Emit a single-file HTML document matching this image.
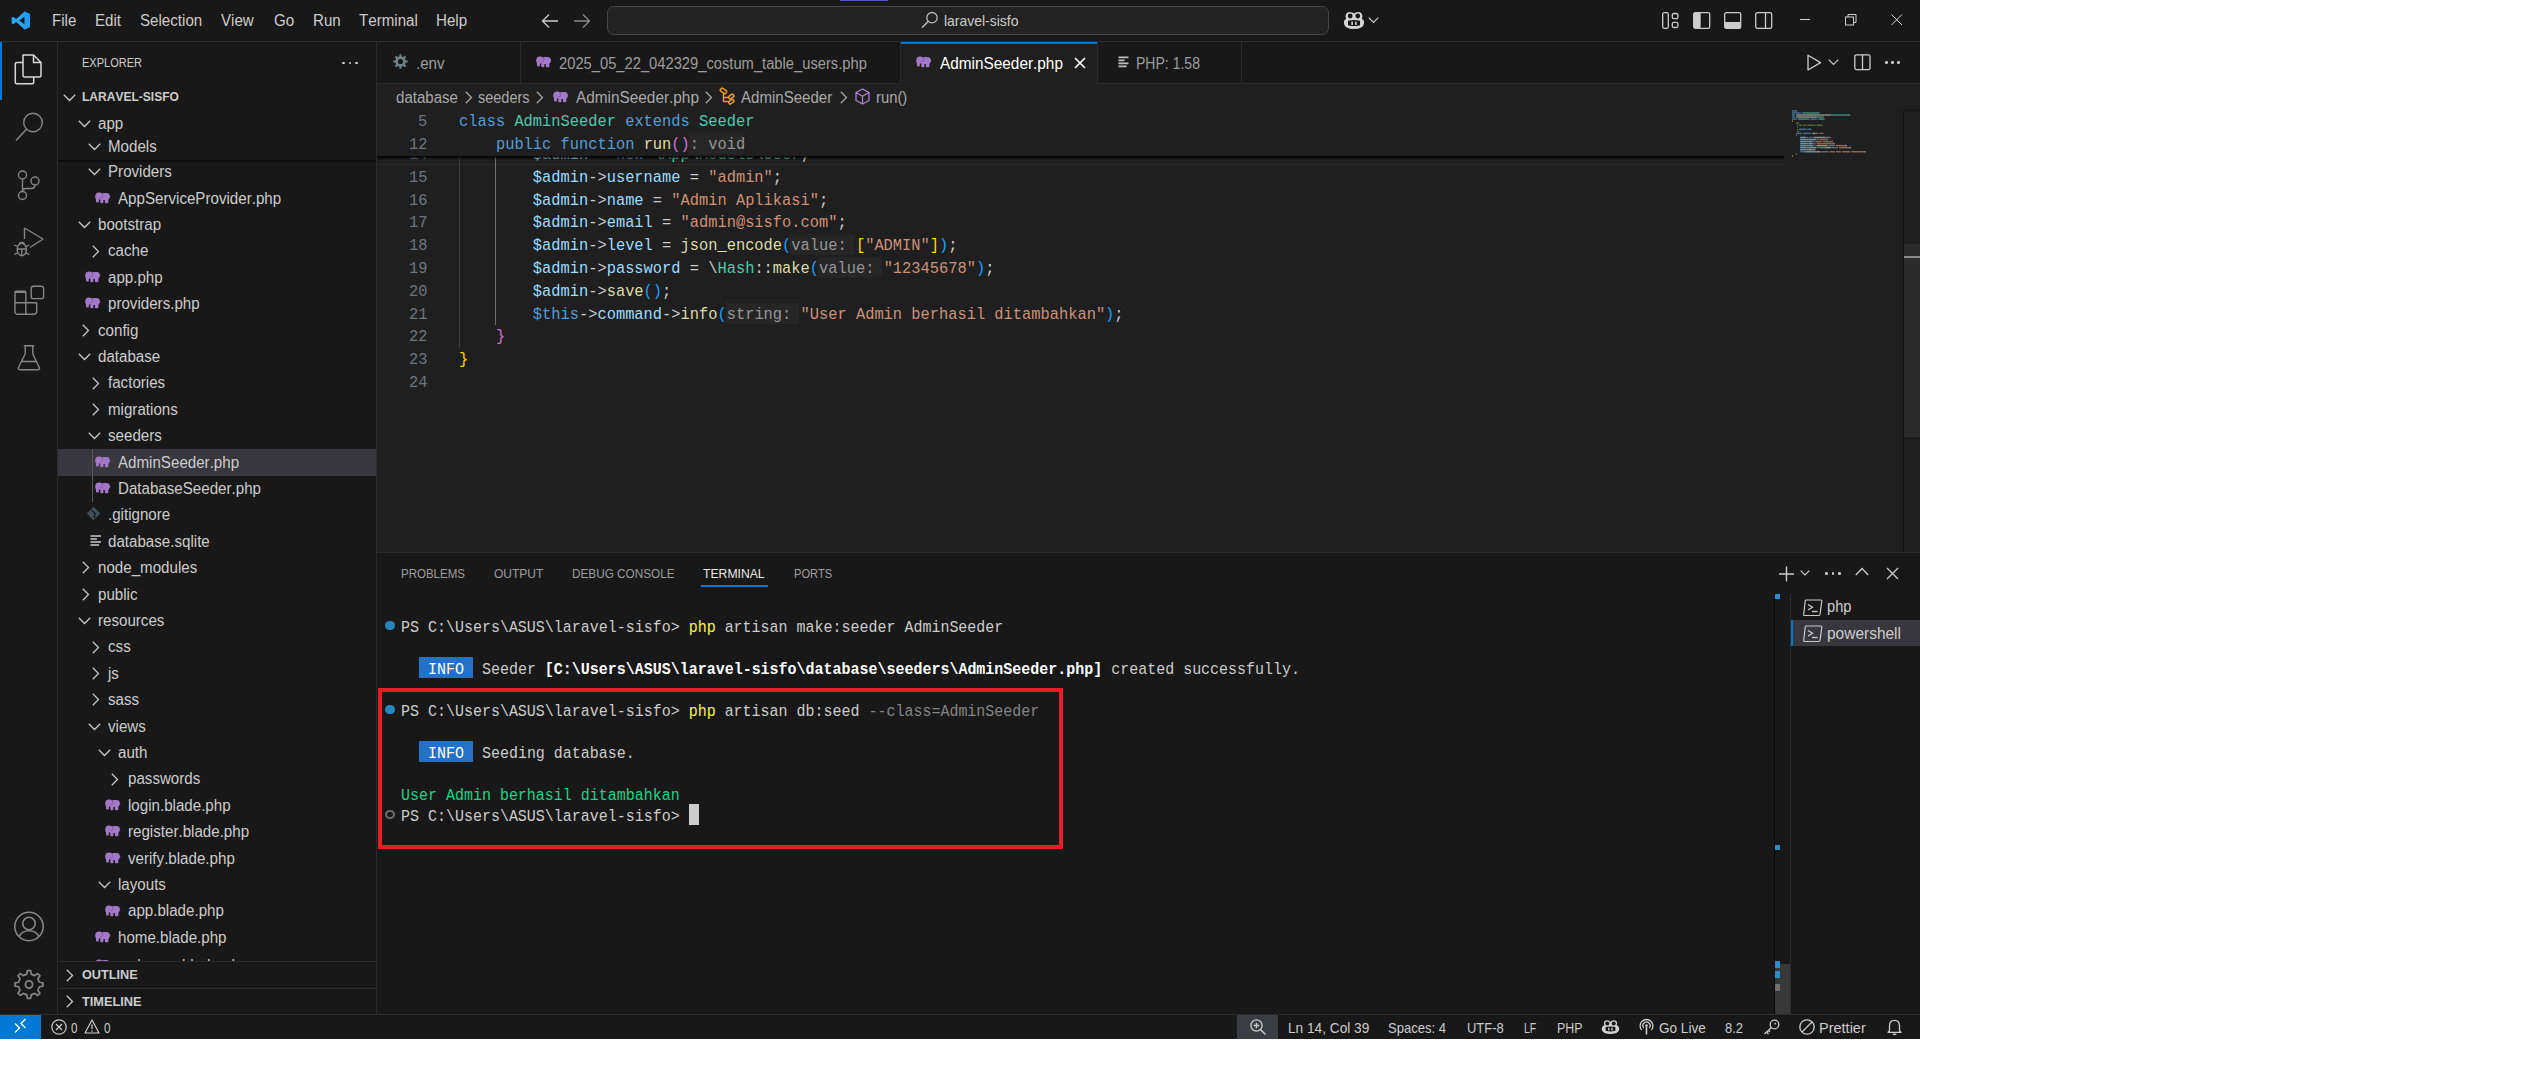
<!DOCTYPE html>
<html><head><meta charset="utf-8">
<style>
*{margin:0;padding:0;box-sizing:border-box}
html,body{width:2544px;height:1080px;background:#fff;overflow:hidden}
body{position:relative;font-family:"Liberation Sans",sans-serif}
.a{position:absolute}
.t{position:absolute;white-space:pre;font-kerning:none}
svg{position:absolute;overflow:visible}
#win{position:absolute;left:0;top:0;width:1920px;height:1039px;background:#181818;overflow:hidden}
</style></head><body><div id="win">
<div class="a" style="left:0px;top:41px;width:1920px;height:1px;background:#2b2b2b;"></div>
<div class="a" style="left:840px;top:0px;width:48px;height:1px;background:#5359c4;"></div>
<svg style="left:11px;top:11px;" width="19" height="19" viewBox="0 0 19 19"><path d="M13.6 0.6 L18.2 2.8 Q19 3.2 19 4.1 V14.9 Q19 15.8 18.2 16.2 L13.6 18.4 L5.2 10.9 L2.2 13.2 L0.6 12.3 V6.7 L2.2 5.8 L5.2 8.1 Z M13.7 5.6 L8.4 9.5 L13.7 13.4 Z" fill="#2aa4f4"/><path d="M13.6 0.6 L18.2 2.8 Q19 3.2 19 4.1 V14.9 Q19 15.8 18.2 16.2 L13.6 18.4 Z" fill="#1f9cf0" opacity="0.9"/></svg>
<div class="t" style="left:52.00px;top:11.88px;font-size:15.6px;line-height:17.428px;color:#cccccc;font-family:'Liberation Sans',sans-serif;transform:scaleX(0.9700);transform-origin:0 0;">File</div>
<div class="t" style="left:95.00px;top:11.88px;font-size:15.6px;line-height:17.428px;color:#cccccc;font-family:'Liberation Sans',sans-serif;transform:scaleX(0.9700);transform-origin:0 0;">Edit</div>
<div class="t" style="left:140.00px;top:11.88px;font-size:15.6px;line-height:17.428px;color:#cccccc;font-family:'Liberation Sans',sans-serif;transform:scaleX(0.9700);transform-origin:0 0;">Selection</div>
<div class="t" style="left:221.30px;top:11.88px;font-size:15.6px;line-height:17.428px;color:#cccccc;font-family:'Liberation Sans',sans-serif;transform:scaleX(0.9700);transform-origin:0 0;">View</div>
<div class="t" style="left:274.00px;top:11.88px;font-size:15.6px;line-height:17.428px;color:#cccccc;font-family:'Liberation Sans',sans-serif;transform:scaleX(0.9700);transform-origin:0 0;">Go</div>
<div class="t" style="left:313.00px;top:11.88px;font-size:15.6px;line-height:17.428px;color:#cccccc;font-family:'Liberation Sans',sans-serif;transform:scaleX(0.9700);transform-origin:0 0;">Run</div>
<div class="t" style="left:359.20px;top:11.88px;font-size:15.6px;line-height:17.428px;color:#cccccc;font-family:'Liberation Sans',sans-serif;transform:scaleX(0.9700);transform-origin:0 0;">Terminal</div>
<div class="t" style="left:436.00px;top:11.88px;font-size:15.6px;line-height:17.428px;color:#cccccc;font-family:'Liberation Sans',sans-serif;transform:scaleX(0.9700);transform-origin:0 0;">Help</div>
<svg style="left:541px;top:13px;" width="18" height="16" viewBox="0 0 18 16"><path d="M8 1.5 L1.5 8 L8 14.5 M1.5 8 H17" stroke="#cccccc" stroke-width="1.3" fill="none"/></svg>
<svg style="left:573px;top:13px;" width="18" height="16" viewBox="0 0 18 16"><path d="M10 1.5 L16.5 8 L10 14.5 M16.5 8 H1" stroke="#8b8b8b" stroke-width="1.3" fill="none"/></svg>
<div class="a" style="left:607px;top:6px;width:722px;height:29px;background:#222222;border:1px solid #474747;border-radius:7px;"></div>
<svg style="left:921px;top:11px;" width="18" height="18" viewBox="0 0 18 18"><circle cx="11" cy="6.7" r="5.2" stroke="#b8b8b8" stroke-width="1.3" fill="none"/><path d="M7.3 10.4 L1 16.7" stroke="#b8b8b8" stroke-width="1.5"/></svg>
<div class="t" style="left:943.50px;top:12.96px;font-size:14.4px;line-height:16.088px;color:#cccccc;font-family:'Liberation Sans',sans-serif;transform:scaleX(0.9700);transform-origin:0 0;">laravel-sisfo</div>
<svg style="left:1343px;top:11px;" width="22" height="19" viewBox="0 0 22 19"><path d="M3.2 7.6 Q2.4 6.5 2.6 4.8 Q3 0.9 7 0.9 Q9.6 0.9 11 2.6 Q12.4 0.9 15 0.9 Q19 0.9 19.4 4.8 Q19.6 6.5 18.8 7.6 Q21.3 9.2 21 12.4 Q20.4 17.8 11 18 Q1.6 17.8 1 12.4 Q0.7 9.2 3.2 7.6 Z" fill="#d4d4d4"/><circle cx="7.2" cy="5" r="2.4" fill="#181818"/><circle cx="14.8" cy="5" r="2.4" fill="#181818"/><path d="M5 9.8 Q11 8.3 17 9.8 V14.2 Q11 16 5 14.2 Z" fill="#181818"/><rect x="8.3" y="10.6" width="1.6" height="3.4" rx="0.5" fill="#d4d4d4"/><rect x="12.1" y="10.6" width="1.6" height="3.4" rx="0.5" fill="#d4d4d4"/></svg>
<svg style="left:1368px;top:17px;" width="11" height="7" viewBox="0 0 11 7"><path d="M0.7 0.7 L5.5 5.5 L10.3 0.7" stroke="#cccccc" stroke-width="1.2" fill="none"/></svg>
<svg style="left:1662px;top:12px;" width="18" height="17" viewBox="0 0 18 17"><rect x="0.7" y="0.7" width="5.6" height="15.6" rx="1.5" stroke="#cccccc" stroke-width="1.3" fill="none"/><rect x="10.3" y="1.5" width="5.6" height="5.2" rx="1.5" stroke="#cccccc" stroke-width="1.3" fill="none"/><rect x="10.3" y="10.3" width="5.6" height="5.2" rx="1.5" stroke="#cccccc" stroke-width="1.3" fill="none"/></svg>
<svg style="left:1693px;top:12px;" width="18" height="17" viewBox="0 0 18 17"><rect x="0.7" y="0.7" width="16" height="15.6" rx="1.6" stroke="#cccccc" stroke-width="1.3" fill="none"/><rect x="0.7" y="0.7" width="7" height="15.6" rx="1.2" fill="#cccccc"/></svg>
<svg style="left:1724px;top:12px;" width="18" height="17" viewBox="0 0 18 17"><rect x="0.7" y="0.7" width="16" height="15.6" rx="1.6" stroke="#cccccc" stroke-width="1.3" fill="none"/><rect x="0.7" y="10" width="16" height="6.3" rx="1.2" fill="#cccccc"/></svg>
<svg style="left:1755px;top:12px;" width="18" height="17" viewBox="0 0 18 17"><rect x="0.7" y="0.7" width="16" height="15.6" rx="1.6" stroke="#cccccc" stroke-width="1.3" fill="none"/><path d="M10.5 1 V16" stroke="#cccccc" stroke-width="1.3"/></svg>
<div class="a" style="left:1800px;top:19px;width:10px;height:1px;background:#d0d0d0;"></div>
<svg style="left:1845px;top:14px;" width="12" height="12" viewBox="0 0 12 12"><rect x="0.5" y="3" width="8" height="8" stroke="#d0d0d0" stroke-width="1" fill="none"/><path d="M3 3 V0.5 H11 V8.5 H8.5" stroke="#d0d0d0" stroke-width="1" fill="none"/></svg>
<svg style="left:1891px;top:14px;" width="12" height="12" viewBox="0 0 12 12"><path d="M0.5 0.5 L11 11 M11 0.5 L0.5 11" stroke="#d8d8d8" stroke-width="1"/></svg>
<div class="a" style="left:57px;top:42px;width:1px;height:972px;background:#2b2b2b;"></div>
<div class="a" style="left:0px;top:42px;width:2px;height:58px;background:#0078d4;"></div>
<svg style="left:14px;top:54px;" width="29" height="31" viewBox="0 0 29 31"><path d="M9 1 H19.5 L27 8.5 V21.5 Q27 23 25.5 23 H10.5 Q9 23 9 21.5 Z" stroke="#d7d7d7" stroke-width="1.5" fill="none" stroke-linejoin="round"/><path d="M19.5 1 V8.5 H27" stroke="#d7d7d7" stroke-width="1.5" fill="none"/><path d="M9 8.5 H2.8 Q1.3 8.5 1.3 10 V28.3 Q1.3 29.8 2.8 29.8 H18.2 Q19.7 29.8 19.7 28.3 V23" stroke="#d7d7d7" stroke-width="1.5" fill="none"/></svg>
<svg style="left:14px;top:111px;" width="30" height="32" viewBox="0 0 30 32"><circle cx="19" cy="11.5" r="9.3" stroke="#868686" stroke-width="1.4" fill="none"/><path d="M12.5 18.3 L2 29.5" stroke="#868686" stroke-width="1.6"/></svg>
<svg style="left:16px;top:168px;" width="25" height="33" viewBox="0 0 25 33"><circle cx="6.5" cy="7" r="4" stroke="#868686" stroke-width="1.4" fill="none"/><circle cx="19" cy="13" r="4" stroke="#868686" stroke-width="1.4" fill="none"/><circle cx="6.5" cy="27.5" r="4" stroke="#868686" stroke-width="1.4" fill="none"/><path d="M6.5 11 V23.5 M19 17 Q19 20.5 15.5 20.5 H10 Q6.5 20.5 6.5 23.5" stroke="#868686" stroke-width="1.4" fill="none"/></svg>
<svg style="left:13px;top:226px;" width="32" height="34" viewBox="0 0 32 34"><path d="M11.5 2 L30 13 L17 21.5 M11.5 2 V13" stroke="#868686" stroke-width="1.4" fill="none" stroke-linejoin="round"/><ellipse cx="8.8" cy="23.5" rx="4.6" ry="6.2" stroke="#868686" stroke-width="1.4" fill="#181818"/><path d="M4.2 23 H13.4 M6 17.5 Q8.8 15.3 11.6 17.5 M1.3 19 L4.5 20.5 M16.3 19 L13.1 20.5 M1.3 28.5 L4.6 26.8 M16.3 28.5 L13 26.8 M8.8 23 V29.5" stroke="#868686" stroke-width="1.3" fill="none"/></svg>
<svg style="left:13px;top:285px;" width="32" height="31" viewBox="0 0 32 31"><path d="M2 7.3 H12.8 V17.8 H23.7 V26.6 Q23.7 29.3 21 29.3 H4.7 Q2 29.3 2 26.6 Z M2 17.8 H12.8 V29.3" stroke="#868686" stroke-width="1.4" fill="none" stroke-linejoin="round"/><path d="M2 7.3 Q2 6.3 3 6.3 H11.8 Q12.8 6.3 12.8 7.3" stroke="#868686" stroke-width="1.4" fill="none"/><rect x="18.2" y="1.2" width="12.4" height="12.4" rx="2.2" stroke="#868686" stroke-width="1.4" fill="none"/></svg>
<svg style="left:16px;top:344px;" width="26" height="28" viewBox="0 0 26 28"><path d="M7.8 1.8 H18.2 M9.2 1.8 V10 L2.5 23.5 Q1.8 25.8 4 25.8 H21.8 Q24 25.8 23.3 23.5 L16.8 10 V1.8 M5.5 17.5 H20.5" stroke="#868686" stroke-width="1.4" fill="none" stroke-linejoin="round"/></svg>
<svg style="left:13px;top:911px;" width="32" height="32" viewBox="0 0 32 32"><circle cx="16" cy="15.5" r="14.2" stroke="#868686" stroke-width="1.6" fill="none"/><circle cx="16" cy="12.5" r="6.2" stroke="#868686" stroke-width="1.6" fill="none"/><path d="M6 25.5 Q9 19.7 16 19.7 Q23 19.7 26 25.5" stroke="#868686" stroke-width="1.6" fill="none"/></svg>
<svg style="left:13px;top:968px;" width="32" height="32" viewBox="0 0 32 32"><polygon points="26.36,14.27 29.90,14.85 29.90,18.15 26.36,18.73 24.90,22.25 26.99,25.17 24.67,27.49 21.75,25.40 18.23,26.86 17.65,30.40 14.35,30.40 13.77,26.86 10.25,25.40 7.33,27.49 5.01,25.17 7.10,22.25 5.64,18.73 2.10,18.15 2.10,14.85 5.64,14.27 7.10,10.75 5.01,7.83 7.33,5.51 10.25,7.60 13.77,6.14 14.35,2.60 17.65,2.60 18.23,6.14 21.75,7.60 24.67,5.51 26.99,7.83 24.90,10.75" stroke="#868686" stroke-width="1.7" fill="none" stroke-linejoin="round"/><circle cx="16" cy="16.5" r="3.6" stroke="#868686" stroke-width="1.7" fill="none"/></svg>
<div class="a" style="left:376px;top:42px;width:1px;height:972px;background:#2b2b2b;"></div>
<div class="t" style="left:81.50px;top:56.45px;font-size:13.2px;line-height:14.747px;color:#cccccc;font-family:'Liberation Sans',sans-serif;transform:scaleX(0.8346);transform-origin:0 0;">EXPLORER</div>
<div class="a" style="left:342px;top:61.5px;width:2.6px;height:2.6px;background:#cccccc;border-radius:50%;"></div>
<div class="a" style="left:348.5px;top:61.5px;width:2.6px;height:2.6px;background:#cccccc;border-radius:50%;"></div>
<div class="a" style="left:355px;top:61.5px;width:2.6px;height:2.6px;background:#cccccc;border-radius:50%;"></div>
<div class="a" style="left:0;top:0;width:1920px;height:1039px;clip-path:inset(110px 1544px 78px 58px)">
<div class="a" style="left:58px;top:449.4px;width:318px;height:26.4px;background:#37373d;"></div>
<div class="a" style="left:92px;top:449.4px;width:1px;height:52.8px;background:#585858;"></div>
<svg style="left:88.10000000000001px;top:168.4px;" width="13" height="8" viewBox="0 0 13 8"><path d="M0.8 0.8 L6.5 6.5 L12.2 0.8" stroke="#cccccc" stroke-width="1.25" fill="none"/></svg>
<div class="t" style="left:108.10px;top:163.28px;font-size:15.6px;line-height:17.428px;color:#cccccc;font-family:'Liberation Sans',sans-serif;transform:scaleX(0.9700);transform-origin:0 0;">Providers</div>
<svg style="left:94.80000000000001px;top:191.8px;" width="16" height="12" viewBox="0 0 16 12"><path d="M4.2 0.6 Q0.2 0.6 0.2 4.6 Q0.2 6.5 1 7.5 V9.4 Q1 10.4 2 10.4 H2.9 Q3.9 10.4 3.9 9.4 V7.4 Q4.6 7.6 5.3 7.3 V10.2 Q5.3 11.3 6.3 11.3 H7.4 Q8.4 11.3 8.4 10.2 V7.9 H9.9 V10.2 Q9.9 11.3 10.9 11.3 H12.3 Q13.4 11.3 13.4 10.2 V7.7 Q14.6 6.6 14.9 5.3 L15.6 4.8 L14.9 4.3 Q14.5 1.1 11.4 1.1 H8.6 Q7.7 1.1 7.1 1.4 Q6 0.6 4.2 0.6 Z" fill="#a478c8"/><path d="M7.3 1.4 Q8.3 3.6 7.4 5.1 Q6.5 6.3 5.1 5.4" stroke="#7a58a0" stroke-width="0.8" fill="none"/></svg>
<div class="t" style="left:117.80px;top:189.68px;font-size:15.6px;line-height:17.428px;color:#cccccc;font-family:'Liberation Sans',sans-serif;transform:scaleX(0.9700);transform-origin:0 0;">AppServiceProvider.php</div>
<svg style="left:78.4px;top:221.2px;" width="13" height="8" viewBox="0 0 13 8"><path d="M0.8 0.8 L6.5 6.5 L12.2 0.8" stroke="#cccccc" stroke-width="1.25" fill="none"/></svg>
<div class="t" style="left:98.40px;top:216.08px;font-size:15.6px;line-height:17.428px;color:#cccccc;font-family:'Liberation Sans',sans-serif;transform:scaleX(0.9700);transform-origin:0 0;">bootstrap</div>
<svg style="left:91.60000000000001px;top:244.60000000000002px;" width="8" height="13" viewBox="0 0 8 13"><path d="M0.8 0.8 L6.5 6.5 L0.8 12.2" stroke="#cccccc" stroke-width="1.25" fill="none"/></svg>
<div class="t" style="left:108.10px;top:242.48px;font-size:15.6px;line-height:17.428px;color:#cccccc;font-family:'Liberation Sans',sans-serif;transform:scaleX(0.9700);transform-origin:0 0;">cache</div>
<svg style="left:85.10000000000001px;top:271.0px;" width="16" height="12" viewBox="0 0 16 12"><path d="M4.2 0.6 Q0.2 0.6 0.2 4.6 Q0.2 6.5 1 7.5 V9.4 Q1 10.4 2 10.4 H2.9 Q3.9 10.4 3.9 9.4 V7.4 Q4.6 7.6 5.3 7.3 V10.2 Q5.3 11.3 6.3 11.3 H7.4 Q8.4 11.3 8.4 10.2 V7.9 H9.9 V10.2 Q9.9 11.3 10.9 11.3 H12.3 Q13.4 11.3 13.4 10.2 V7.7 Q14.6 6.6 14.9 5.3 L15.6 4.8 L14.9 4.3 Q14.5 1.1 11.4 1.1 H8.6 Q7.7 1.1 7.1 1.4 Q6 0.6 4.2 0.6 Z" fill="#a478c8"/><path d="M7.3 1.4 Q8.3 3.6 7.4 5.1 Q6.5 6.3 5.1 5.4" stroke="#7a58a0" stroke-width="0.8" fill="none"/></svg>
<div class="t" style="left:108.10px;top:268.88px;font-size:15.6px;line-height:17.428px;color:#cccccc;font-family:'Liberation Sans',sans-serif;transform:scaleX(0.9700);transform-origin:0 0;">app.php</div>
<svg style="left:85.10000000000001px;top:297.4px;" width="16" height="12" viewBox="0 0 16 12"><path d="M4.2 0.6 Q0.2 0.6 0.2 4.6 Q0.2 6.5 1 7.5 V9.4 Q1 10.4 2 10.4 H2.9 Q3.9 10.4 3.9 9.4 V7.4 Q4.6 7.6 5.3 7.3 V10.2 Q5.3 11.3 6.3 11.3 H7.4 Q8.4 11.3 8.4 10.2 V7.9 H9.9 V10.2 Q9.9 11.3 10.9 11.3 H12.3 Q13.4 11.3 13.4 10.2 V7.7 Q14.6 6.6 14.9 5.3 L15.6 4.8 L14.9 4.3 Q14.5 1.1 11.4 1.1 H8.6 Q7.7 1.1 7.1 1.4 Q6 0.6 4.2 0.6 Z" fill="#a478c8"/><path d="M7.3 1.4 Q8.3 3.6 7.4 5.1 Q6.5 6.3 5.1 5.4" stroke="#7a58a0" stroke-width="0.8" fill="none"/></svg>
<div class="t" style="left:108.10px;top:295.28px;font-size:15.6px;line-height:17.428px;color:#cccccc;font-family:'Liberation Sans',sans-serif;transform:scaleX(0.9700);transform-origin:0 0;">providers.php</div>
<svg style="left:81.9px;top:323.79999999999995px;" width="8" height="13" viewBox="0 0 8 13"><path d="M0.8 0.8 L6.5 6.5 L0.8 12.2" stroke="#cccccc" stroke-width="1.25" fill="none"/></svg>
<div class="t" style="left:98.40px;top:321.68px;font-size:15.6px;line-height:17.428px;color:#cccccc;font-family:'Liberation Sans',sans-serif;transform:scaleX(0.9700);transform-origin:0 0;">config</div>
<svg style="left:78.4px;top:353.2px;" width="13" height="8" viewBox="0 0 13 8"><path d="M0.8 0.8 L6.5 6.5 L12.2 0.8" stroke="#cccccc" stroke-width="1.25" fill="none"/></svg>
<div class="t" style="left:98.40px;top:348.08px;font-size:15.6px;line-height:17.428px;color:#cccccc;font-family:'Liberation Sans',sans-serif;transform:scaleX(0.9700);transform-origin:0 0;">database</div>
<svg style="left:91.60000000000001px;top:376.6px;" width="8" height="13" viewBox="0 0 8 13"><path d="M0.8 0.8 L6.5 6.5 L0.8 12.2" stroke="#cccccc" stroke-width="1.25" fill="none"/></svg>
<div class="t" style="left:108.10px;top:374.48px;font-size:15.6px;line-height:17.428px;color:#cccccc;font-family:'Liberation Sans',sans-serif;transform:scaleX(0.9700);transform-origin:0 0;">factories</div>
<svg style="left:91.60000000000001px;top:403.0px;" width="8" height="13" viewBox="0 0 8 13"><path d="M0.8 0.8 L6.5 6.5 L0.8 12.2" stroke="#cccccc" stroke-width="1.25" fill="none"/></svg>
<div class="t" style="left:108.10px;top:400.88px;font-size:15.6px;line-height:17.428px;color:#cccccc;font-family:'Liberation Sans',sans-serif;transform:scaleX(0.9700);transform-origin:0 0;">migrations</div>
<svg style="left:88.10000000000001px;top:432.4px;" width="13" height="8" viewBox="0 0 13 8"><path d="M0.8 0.8 L6.5 6.5 L12.2 0.8" stroke="#cccccc" stroke-width="1.25" fill="none"/></svg>
<div class="t" style="left:108.10px;top:427.28px;font-size:15.6px;line-height:17.428px;color:#cccccc;font-family:'Liberation Sans',sans-serif;transform:scaleX(0.9700);transform-origin:0 0;">seeders</div>
<svg style="left:94.80000000000001px;top:455.79999999999995px;" width="16" height="12" viewBox="0 0 16 12"><path d="M4.2 0.6 Q0.2 0.6 0.2 4.6 Q0.2 6.5 1 7.5 V9.4 Q1 10.4 2 10.4 H2.9 Q3.9 10.4 3.9 9.4 V7.4 Q4.6 7.6 5.3 7.3 V10.2 Q5.3 11.3 6.3 11.3 H7.4 Q8.4 11.3 8.4 10.2 V7.9 H9.9 V10.2 Q9.9 11.3 10.9 11.3 H12.3 Q13.4 11.3 13.4 10.2 V7.7 Q14.6 6.6 14.9 5.3 L15.6 4.8 L14.9 4.3 Q14.5 1.1 11.4 1.1 H8.6 Q7.7 1.1 7.1 1.4 Q6 0.6 4.2 0.6 Z" fill="#a478c8"/><path d="M7.3 1.4 Q8.3 3.6 7.4 5.1 Q6.5 6.3 5.1 5.4" stroke="#7a58a0" stroke-width="0.8" fill="none"/></svg>
<div class="t" style="left:117.80px;top:453.68px;font-size:15.6px;line-height:17.428px;color:#cccccc;font-family:'Liberation Sans',sans-serif;transform:scaleX(0.9700);transform-origin:0 0;">AdminSeeder.php</div>
<svg style="left:94.80000000000001px;top:482.19999999999993px;" width="16" height="12" viewBox="0 0 16 12"><path d="M4.2 0.6 Q0.2 0.6 0.2 4.6 Q0.2 6.5 1 7.5 V9.4 Q1 10.4 2 10.4 H2.9 Q3.9 10.4 3.9 9.4 V7.4 Q4.6 7.6 5.3 7.3 V10.2 Q5.3 11.3 6.3 11.3 H7.4 Q8.4 11.3 8.4 10.2 V7.9 H9.9 V10.2 Q9.9 11.3 10.9 11.3 H12.3 Q13.4 11.3 13.4 10.2 V7.7 Q14.6 6.6 14.9 5.3 L15.6 4.8 L14.9 4.3 Q14.5 1.1 11.4 1.1 H8.6 Q7.7 1.1 7.1 1.4 Q6 0.6 4.2 0.6 Z" fill="#a478c8"/><path d="M7.3 1.4 Q8.3 3.6 7.4 5.1 Q6.5 6.3 5.1 5.4" stroke="#7a58a0" stroke-width="0.8" fill="none"/></svg>
<div class="t" style="left:117.80px;top:480.08px;font-size:15.6px;line-height:17.428px;color:#cccccc;font-family:'Liberation Sans',sans-serif;transform:scaleX(0.9700);transform-origin:0 0;">DatabaseSeeder.php</div>
<svg style="left:85.60000000000001px;top:505.6px;" width="15" height="15" viewBox="0 0 15 15"><path d="M7.5 0.8 L14.2 7.5 L7.5 14.2 L0.8 7.5 Z" fill="#41535b"/><path d="M5.5 4 L8.5 7 V11 M8.5 7 L10 8.5" stroke="#181818" stroke-width="1.1" fill="none"/><circle cx="8.5" cy="11" r="1.1" fill="#181818"/></svg>
<div class="t" style="left:108.10px;top:506.48px;font-size:15.6px;line-height:17.428px;color:#cccccc;font-family:'Liberation Sans',sans-serif;transform:scaleX(0.9700);transform-origin:0 0;">.gitignore</div>
<svg style="left:89.60000000000001px;top:535.0px;" width="12" height="12" viewBox="0 0 12 12"><path d="M0.5 1 H11 M0.5 4 H6.8 M0.5 7 H11 M0.5 10 H9" stroke="#cccccc" stroke-width="1.4"/></svg>
<div class="t" style="left:108.10px;top:532.88px;font-size:15.6px;line-height:17.428px;color:#cccccc;font-family:'Liberation Sans',sans-serif;transform:scaleX(0.9700);transform-origin:0 0;">database.sqlite</div>
<svg style="left:81.9px;top:561.4px;" width="8" height="13" viewBox="0 0 8 13"><path d="M0.8 0.8 L6.5 6.5 L0.8 12.2" stroke="#cccccc" stroke-width="1.25" fill="none"/></svg>
<div class="t" style="left:98.40px;top:559.28px;font-size:15.6px;line-height:17.428px;color:#cccccc;font-family:'Liberation Sans',sans-serif;transform:scaleX(0.9700);transform-origin:0 0;">node_modules</div>
<svg style="left:81.9px;top:587.8px;" width="8" height="13" viewBox="0 0 8 13"><path d="M0.8 0.8 L6.5 6.5 L0.8 12.2" stroke="#cccccc" stroke-width="1.25" fill="none"/></svg>
<div class="t" style="left:98.40px;top:585.68px;font-size:15.6px;line-height:17.428px;color:#cccccc;font-family:'Liberation Sans',sans-serif;transform:scaleX(0.9700);transform-origin:0 0;">public</div>
<svg style="left:78.4px;top:617.1999999999999px;" width="13" height="8" viewBox="0 0 13 8"><path d="M0.8 0.8 L6.5 6.5 L12.2 0.8" stroke="#cccccc" stroke-width="1.25" fill="none"/></svg>
<div class="t" style="left:98.40px;top:612.08px;font-size:15.6px;line-height:17.428px;color:#cccccc;font-family:'Liberation Sans',sans-serif;transform:scaleX(0.9700);transform-origin:0 0;">resources</div>
<svg style="left:91.60000000000001px;top:640.6px;" width="8" height="13" viewBox="0 0 8 13"><path d="M0.8 0.8 L6.5 6.5 L0.8 12.2" stroke="#cccccc" stroke-width="1.25" fill="none"/></svg>
<div class="t" style="left:108.10px;top:638.48px;font-size:15.6px;line-height:17.428px;color:#cccccc;font-family:'Liberation Sans',sans-serif;transform:scaleX(0.9700);transform-origin:0 0;">css</div>
<svg style="left:91.60000000000001px;top:667.0px;" width="8" height="13" viewBox="0 0 8 13"><path d="M0.8 0.8 L6.5 6.5 L0.8 12.2" stroke="#cccccc" stroke-width="1.25" fill="none"/></svg>
<div class="t" style="left:108.10px;top:664.88px;font-size:15.6px;line-height:17.428px;color:#cccccc;font-family:'Liberation Sans',sans-serif;transform:scaleX(0.9700);transform-origin:0 0;">js</div>
<svg style="left:91.60000000000001px;top:693.4px;" width="8" height="13" viewBox="0 0 8 13"><path d="M0.8 0.8 L6.5 6.5 L0.8 12.2" stroke="#cccccc" stroke-width="1.25" fill="none"/></svg>
<div class="t" style="left:108.10px;top:691.28px;font-size:15.6px;line-height:17.428px;color:#cccccc;font-family:'Liberation Sans',sans-serif;transform:scaleX(0.9700);transform-origin:0 0;">sass</div>
<svg style="left:88.10000000000001px;top:722.8px;" width="13" height="8" viewBox="0 0 13 8"><path d="M0.8 0.8 L6.5 6.5 L12.2 0.8" stroke="#cccccc" stroke-width="1.25" fill="none"/></svg>
<div class="t" style="left:108.10px;top:717.68px;font-size:15.6px;line-height:17.428px;color:#cccccc;font-family:'Liberation Sans',sans-serif;transform:scaleX(0.9700);transform-origin:0 0;">views</div>
<svg style="left:97.80000000000001px;top:749.1999999999999px;" width="13" height="8" viewBox="0 0 13 8"><path d="M0.8 0.8 L6.5 6.5 L12.2 0.8" stroke="#cccccc" stroke-width="1.25" fill="none"/></svg>
<div class="t" style="left:117.80px;top:744.08px;font-size:15.6px;line-height:17.428px;color:#cccccc;font-family:'Liberation Sans',sans-serif;transform:scaleX(0.9700);transform-origin:0 0;">auth</div>
<svg style="left:111.0px;top:772.5999999999999px;" width="8" height="13" viewBox="0 0 8 13"><path d="M0.8 0.8 L6.5 6.5 L0.8 12.2" stroke="#cccccc" stroke-width="1.25" fill="none"/></svg>
<div class="t" style="left:127.50px;top:770.48px;font-size:15.6px;line-height:17.428px;color:#cccccc;font-family:'Liberation Sans',sans-serif;transform:scaleX(0.9700);transform-origin:0 0;">passwords</div>
<svg style="left:104.5px;top:798.9999999999999px;" width="16" height="12" viewBox="0 0 16 12"><path d="M4.2 0.6 Q0.2 0.6 0.2 4.6 Q0.2 6.5 1 7.5 V9.4 Q1 10.4 2 10.4 H2.9 Q3.9 10.4 3.9 9.4 V7.4 Q4.6 7.6 5.3 7.3 V10.2 Q5.3 11.3 6.3 11.3 H7.4 Q8.4 11.3 8.4 10.2 V7.9 H9.9 V10.2 Q9.9 11.3 10.9 11.3 H12.3 Q13.4 11.3 13.4 10.2 V7.7 Q14.6 6.6 14.9 5.3 L15.6 4.8 L14.9 4.3 Q14.5 1.1 11.4 1.1 H8.6 Q7.7 1.1 7.1 1.4 Q6 0.6 4.2 0.6 Z" fill="#a478c8"/><path d="M7.3 1.4 Q8.3 3.6 7.4 5.1 Q6.5 6.3 5.1 5.4" stroke="#7a58a0" stroke-width="0.8" fill="none"/></svg>
<div class="t" style="left:127.50px;top:796.88px;font-size:15.6px;line-height:17.428px;color:#cccccc;font-family:'Liberation Sans',sans-serif;transform:scaleX(0.9700);transform-origin:0 0;">login.blade.php</div>
<svg style="left:104.5px;top:825.4px;" width="16" height="12" viewBox="0 0 16 12"><path d="M4.2 0.6 Q0.2 0.6 0.2 4.6 Q0.2 6.5 1 7.5 V9.4 Q1 10.4 2 10.4 H2.9 Q3.9 10.4 3.9 9.4 V7.4 Q4.6 7.6 5.3 7.3 V10.2 Q5.3 11.3 6.3 11.3 H7.4 Q8.4 11.3 8.4 10.2 V7.9 H9.9 V10.2 Q9.9 11.3 10.9 11.3 H12.3 Q13.4 11.3 13.4 10.2 V7.7 Q14.6 6.6 14.9 5.3 L15.6 4.8 L14.9 4.3 Q14.5 1.1 11.4 1.1 H8.6 Q7.7 1.1 7.1 1.4 Q6 0.6 4.2 0.6 Z" fill="#a478c8"/><path d="M7.3 1.4 Q8.3 3.6 7.4 5.1 Q6.5 6.3 5.1 5.4" stroke="#7a58a0" stroke-width="0.8" fill="none"/></svg>
<div class="t" style="left:127.50px;top:823.28px;font-size:15.6px;line-height:17.428px;color:#cccccc;font-family:'Liberation Sans',sans-serif;transform:scaleX(0.9700);transform-origin:0 0;">register.blade.php</div>
<svg style="left:104.5px;top:851.8px;" width="16" height="12" viewBox="0 0 16 12"><path d="M4.2 0.6 Q0.2 0.6 0.2 4.6 Q0.2 6.5 1 7.5 V9.4 Q1 10.4 2 10.4 H2.9 Q3.9 10.4 3.9 9.4 V7.4 Q4.6 7.6 5.3 7.3 V10.2 Q5.3 11.3 6.3 11.3 H7.4 Q8.4 11.3 8.4 10.2 V7.9 H9.9 V10.2 Q9.9 11.3 10.9 11.3 H12.3 Q13.4 11.3 13.4 10.2 V7.7 Q14.6 6.6 14.9 5.3 L15.6 4.8 L14.9 4.3 Q14.5 1.1 11.4 1.1 H8.6 Q7.7 1.1 7.1 1.4 Q6 0.6 4.2 0.6 Z" fill="#a478c8"/><path d="M7.3 1.4 Q8.3 3.6 7.4 5.1 Q6.5 6.3 5.1 5.4" stroke="#7a58a0" stroke-width="0.8" fill="none"/></svg>
<div class="t" style="left:127.50px;top:849.68px;font-size:15.6px;line-height:17.428px;color:#cccccc;font-family:'Liberation Sans',sans-serif;transform:scaleX(0.9700);transform-origin:0 0;">verify.blade.php</div>
<svg style="left:97.80000000000001px;top:881.1999999999999px;" width="13" height="8" viewBox="0 0 13 8"><path d="M0.8 0.8 L6.5 6.5 L12.2 0.8" stroke="#cccccc" stroke-width="1.25" fill="none"/></svg>
<div class="t" style="left:117.80px;top:876.08px;font-size:15.6px;line-height:17.428px;color:#cccccc;font-family:'Liberation Sans',sans-serif;transform:scaleX(0.9700);transform-origin:0 0;">layouts</div>
<svg style="left:104.5px;top:904.5999999999999px;" width="16" height="12" viewBox="0 0 16 12"><path d="M4.2 0.6 Q0.2 0.6 0.2 4.6 Q0.2 6.5 1 7.5 V9.4 Q1 10.4 2 10.4 H2.9 Q3.9 10.4 3.9 9.4 V7.4 Q4.6 7.6 5.3 7.3 V10.2 Q5.3 11.3 6.3 11.3 H7.4 Q8.4 11.3 8.4 10.2 V7.9 H9.9 V10.2 Q9.9 11.3 10.9 11.3 H12.3 Q13.4 11.3 13.4 10.2 V7.7 Q14.6 6.6 14.9 5.3 L15.6 4.8 L14.9 4.3 Q14.5 1.1 11.4 1.1 H8.6 Q7.7 1.1 7.1 1.4 Q6 0.6 4.2 0.6 Z" fill="#a478c8"/><path d="M7.3 1.4 Q8.3 3.6 7.4 5.1 Q6.5 6.3 5.1 5.4" stroke="#7a58a0" stroke-width="0.8" fill="none"/></svg>
<div class="t" style="left:127.50px;top:902.48px;font-size:15.6px;line-height:17.428px;color:#cccccc;font-family:'Liberation Sans',sans-serif;transform:scaleX(0.9700);transform-origin:0 0;">app.blade.php</div>
<svg style="left:94.80000000000001px;top:930.9999999999999px;" width="16" height="12" viewBox="0 0 16 12"><path d="M4.2 0.6 Q0.2 0.6 0.2 4.6 Q0.2 6.5 1 7.5 V9.4 Q1 10.4 2 10.4 H2.9 Q3.9 10.4 3.9 9.4 V7.4 Q4.6 7.6 5.3 7.3 V10.2 Q5.3 11.3 6.3 11.3 H7.4 Q8.4 11.3 8.4 10.2 V7.9 H9.9 V10.2 Q9.9 11.3 10.9 11.3 H12.3 Q13.4 11.3 13.4 10.2 V7.7 Q14.6 6.6 14.9 5.3 L15.6 4.8 L14.9 4.3 Q14.5 1.1 11.4 1.1 H8.6 Q7.7 1.1 7.1 1.4 Q6 0.6 4.2 0.6 Z" fill="#a478c8"/><path d="M7.3 1.4 Q8.3 3.6 7.4 5.1 Q6.5 6.3 5.1 5.4" stroke="#7a58a0" stroke-width="0.8" fill="none"/></svg>
<div class="t" style="left:117.80px;top:928.88px;font-size:15.6px;line-height:17.428px;color:#cccccc;font-family:'Liberation Sans',sans-serif;transform:scaleX(0.9700);transform-origin:0 0;">home.blade.php</div>
<svg style="left:94.80000000000001px;top:958.6999999999999px;" width="16" height="12" viewBox="0 0 16 12"><path d="M4.2 0.6 Q0.2 0.6 0.2 4.6 Q0.2 6.5 1 7.5 V9.4 Q1 10.4 2 10.4 H2.9 Q3.9 10.4 3.9 9.4 V7.4 Q4.6 7.6 5.3 7.3 V10.2 Q5.3 11.3 6.3 11.3 H7.4 Q8.4 11.3 8.4 10.2 V7.9 H9.9 V10.2 Q9.9 11.3 10.9 11.3 H12.3 Q13.4 11.3 13.4 10.2 V7.7 Q14.6 6.6 14.9 5.3 L15.6 4.8 L14.9 4.3 Q14.5 1.1 11.4 1.1 H8.6 Q7.7 1.1 7.1 1.4 Q6 0.6 4.2 0.6 Z" fill="#a478c8"/><path d="M7.3 1.4 Q8.3 3.6 7.4 5.1 Q6.5 6.3 5.1 5.4" stroke="#7a58a0" stroke-width="0.8" fill="none"/></svg>
<div class="t" style="left:117.80px;top:956.58px;font-size:15.6px;line-height:17.428px;color:#cccccc;font-family:'Liberation Sans',sans-serif;transform:scaleX(0.9700);transform-origin:0 0;">welcome.blade.php</div>
<div class="a" style="left:58px;top:110px;width:318px;height:50px;background:#181818;"></div>
<svg style="left:78.4px;top:119.80000000000001px;" width="13" height="8" viewBox="0 0 13 8"><path d="M0.8 0.8 L6.5 6.5 L12.2 0.8" stroke="#cccccc" stroke-width="1.25" fill="none"/></svg>
<div class="t" style="left:98.40px;top:114.68px;font-size:15.6px;line-height:17.428px;color:#cccccc;font-family:'Liberation Sans',sans-serif;transform:scaleX(0.9700);transform-origin:0 0;">app</div>
<svg style="left:88.10000000000001px;top:142.8px;" width="13" height="8" viewBox="0 0 13 8"><path d="M0.8 0.8 L6.5 6.5 L12.2 0.8" stroke="#cccccc" stroke-width="1.25" fill="none"/></svg>
<div class="t" style="left:108.10px;top:137.68px;font-size:15.6px;line-height:17.428px;color:#cccccc;font-family:'Liberation Sans',sans-serif;transform:scaleX(0.9700);transform-origin:0 0;">Models</div>
<div class="a" style="left:58px;top:159.6px;width:318px;height:3px;background:linear-gradient(#000000aa,#00000000);"></div>
</div>
<svg style="left:63.0px;top:94px;" width="13" height="8" viewBox="0 0 13 8"><path d="M0.8 0.8 L6.5 6.5 L12.2 0.8" stroke="#cccccc" stroke-width="1.25" fill="none"/></svg>
<div class="t" style="left:81.70px;top:89.85px;font-size:13.2px;line-height:14.747px;color:#cccccc;font-family:'Liberation Sans',sans-serif;font-weight:bold;transform:scaleX(0.9122);transform-origin:0 0;">LARAVEL-SISFO</div>
<div class="a" style="left:58px;top:961px;width:318px;height:1px;background:#2b2b2b;"></div>
<div class="a" style="left:58px;top:988px;width:318px;height:1px;background:#2b2b2b;"></div>
<svg style="left:66px;top:968.5px;" width="8" height="13" viewBox="0 0 8 13"><path d="M0.8 0.8 L6.5 6.5 L0.8 12.2" stroke="#cccccc" stroke-width="1.25" fill="none"/></svg>
<div class="t" style="left:81.70px;top:968.25px;font-size:13.2px;line-height:14.747px;color:#cccccc;font-family:'Liberation Sans',sans-serif;font-weight:bold;transform:scaleX(0.9615);transform-origin:0 0;">OUTLINE</div>
<svg style="left:66px;top:995.0px;" width="8" height="13" viewBox="0 0 8 13"><path d="M0.8 0.8 L6.5 6.5 L0.8 12.2" stroke="#cccccc" stroke-width="1.25" fill="none"/></svg>
<div class="t" style="left:81.70px;top:994.65px;font-size:13.2px;line-height:14.747px;color:#cccccc;font-family:'Liberation Sans',sans-serif;font-weight:bold;transform:scaleX(0.9676);transform-origin:0 0;">TIMELINE</div>
<div class="a" style="left:377px;top:42px;width:1543px;height:42px;background:#181818;"></div>
<div class="a" style="left:377px;top:83px;width:1543px;height:1px;background:#2b2b2b;"></div>
<div class="a" style="left:520px;top:42px;width:1px;height:41px;background:#2b2b2b;"></div>
<div class="a" style="left:900px;top:42px;width:1px;height:41px;background:#2b2b2b;"></div>
<div class="a" style="left:1097px;top:42px;width:1px;height:41px;background:#2b2b2b;"></div>
<div class="a" style="left:1241px;top:42px;width:1px;height:41px;background:#2b2b2b;"></div>
<div class="a" style="left:901px;top:42px;width:196px;height:42px;background:#1f1f1f;"></div>
<div class="a" style="left:901px;top:42px;width:196px;height:1.6px;background:#0078d4;"></div>
<svg style="left:393px;top:54px;" width="15" height="15" viewBox="0 0 15 15"><path d="M12.56,6.29 L14.64,6.60 L14.64,8.40 L12.56,8.71 L11.93,10.22 L13.19,11.91 L11.91,13.19 L10.22,11.93 L8.71,12.56 L8.40,14.64 L6.60,14.64 L6.29,12.56 L4.78,11.93 L3.09,13.19 L1.81,11.91 L3.07,10.22 L2.44,8.71 L0.36,8.40 L0.36,6.60 L2.44,6.29 L3.07,4.78 L1.81,3.09 L3.09,1.81 L4.78,3.07 L6.29,2.44 L6.60,0.36 L8.40,0.36 L8.71,2.44 L10.22,3.07 L11.91,1.81 L13.19,3.09 L11.93,4.78 Z M10.1,7.5 A2.6,2.6 0 1,0 4.9,7.5 A2.6,2.6 0 1,0 10.1,7.5 Z" fill="#6d8086" fill-rule="evenodd"/></svg>
<div class="t" style="left:416.00px;top:54.68px;font-size:15.6px;line-height:17.428px;color:#9d9d9d;font-family:'Liberation Sans',sans-serif;transform:scaleX(0.9700);transform-origin:0 0;">.env</div>
<svg style="left:536px;top:56px;" width="16" height="12" viewBox="0 0 16 12"><path d="M4.2 0.6 Q0.2 0.6 0.2 4.6 Q0.2 6.5 1 7.5 V9.4 Q1 10.4 2 10.4 H2.9 Q3.9 10.4 3.9 9.4 V7.4 Q4.6 7.6 5.3 7.3 V10.2 Q5.3 11.3 6.3 11.3 H7.4 Q8.4 11.3 8.4 10.2 V7.9 H9.9 V10.2 Q9.9 11.3 10.9 11.3 H12.3 Q13.4 11.3 13.4 10.2 V7.7 Q14.6 6.6 14.9 5.3 L15.6 4.8 L14.9 4.3 Q14.5 1.1 11.4 1.1 H8.6 Q7.7 1.1 7.1 1.4 Q6 0.6 4.2 0.6 Z" fill="#a478c8"/><path d="M7.3 1.4 Q8.3 3.6 7.4 5.1 Q6.5 6.3 5.1 5.4" stroke="#7a58a0" stroke-width="0.8" fill="none"/></svg>
<div class="t" style="left:559.00px;top:54.68px;font-size:15.6px;line-height:17.428px;color:#9d9d9d;font-family:'Liberation Sans',sans-serif;transform:scaleX(0.9444);transform-origin:0 0;">2025_05_22_042329_costum_table_users.php</div>
<svg style="left:916px;top:56px;" width="16" height="12" viewBox="0 0 16 12"><path d="M4.2 0.6 Q0.2 0.6 0.2 4.6 Q0.2 6.5 1 7.5 V9.4 Q1 10.4 2 10.4 H2.9 Q3.9 10.4 3.9 9.4 V7.4 Q4.6 7.6 5.3 7.3 V10.2 Q5.3 11.3 6.3 11.3 H7.4 Q8.4 11.3 8.4 10.2 V7.9 H9.9 V10.2 Q9.9 11.3 10.9 11.3 H12.3 Q13.4 11.3 13.4 10.2 V7.7 Q14.6 6.6 14.9 5.3 L15.6 4.8 L14.9 4.3 Q14.5 1.1 11.4 1.1 H8.6 Q7.7 1.1 7.1 1.4 Q6 0.6 4.2 0.6 Z" fill="#a478c8"/><path d="M7.3 1.4 Q8.3 3.6 7.4 5.1 Q6.5 6.3 5.1 5.4" stroke="#7a58a0" stroke-width="0.8" fill="none"/></svg>
<div class="t" style="left:940.00px;top:54.68px;font-size:15.6px;line-height:17.428px;color:#ffffff;font-family:'Liberation Sans',sans-serif;transform:scaleX(0.9849);transform-origin:0 0;">AdminSeeder.php</div>
<svg style="left:1074px;top:56.5px;" width="12" height="12" viewBox="0 0 12 12"><path d="M1 1 L11 11 M11 1 L1 11" stroke="#ffffff" stroke-width="1.6"/></svg>
<svg style="left:1117.8px;top:56.4px;" width="12" height="12" viewBox="0 0 12 12"><path d="M0.5 1.4 H10.5 M0.5 4.4 H6.5 M0.5 7.4 H10.5 M0.5 10.4 H8.5" stroke="#c0c0c0" stroke-width="1.7"/></svg>
<div class="t" style="left:1136.00px;top:54.68px;font-size:15.6px;line-height:17.428px;color:#9d9d9d;font-family:'Liberation Sans',sans-serif;transform:scaleX(0.9001);transform-origin:0 0;">PHP: 1.58</div>
<svg style="left:1807px;top:54px;" width="15" height="18" viewBox="0 0 15 18"><path d="M1 1.2 L13.5 8.6 L1 16 Z" stroke="#cccccc" stroke-width="1.3" fill="none" stroke-linejoin="round"/></svg>
<svg style="left:1828px;top:59px;" width="11" height="7" viewBox="0 0 11 7"><path d="M0.7 0.7 L5.5 5.5 L10.3 0.7" stroke="#cccccc" stroke-width="1.2" fill="none"/></svg>
<svg style="left:1853.5px;top:54px;" width="17" height="17" viewBox="0 0 17 17"><rect x="0.8" y="0.8" width="15.2" height="14.8" rx="1.6" stroke="#cccccc" stroke-width="1.3" fill="none"/><path d="M8.5 1 V16" stroke="#cccccc" stroke-width="1.3"/></svg>
<div class="a" style="left:1885px;top:61px;width:2.6px;height:2.6px;background:#cccccc;border-radius:50%;"></div>
<div class="a" style="left:1891px;top:61px;width:2.6px;height:2.6px;background:#cccccc;border-radius:50%;"></div>
<div class="a" style="left:1897px;top:61px;width:2.6px;height:2.6px;background:#cccccc;border-radius:50%;"></div>
<div class="a" style="left:377px;top:84px;width:1543px;height:468px;background:#1f1f1f;"></div>
<div class="t" style="left:396.10px;top:88.98px;font-size:15.6px;line-height:17.428px;color:#a9a9a9;font-family:'Liberation Sans',sans-serif;transform:scaleX(0.9659);transform-origin:0 0;">database</div>
<svg style="left:464.5px;top:91.0px;" width="8" height="13" viewBox="0 0 8 13"><path d="M0.8 0.8 L6.5 6.5 L0.8 12.2" stroke="#a9a9a9" stroke-width="1.25" fill="none"/></svg>
<div class="t" style="left:478.00px;top:88.98px;font-size:15.6px;line-height:17.428px;color:#a9a9a9;font-family:'Liberation Sans',sans-serif;transform:scaleX(0.9279);transform-origin:0 0;">seeders</div>
<svg style="left:535.5px;top:91.0px;" width="8" height="13" viewBox="0 0 8 13"><path d="M0.8 0.8 L6.5 6.5 L0.8 12.2" stroke="#a9a9a9" stroke-width="1.25" fill="none"/></svg>
<svg style="left:552.5px;top:90.5px;" width="16" height="12" viewBox="0 0 16 12"><path d="M4.2 0.6 Q0.2 0.6 0.2 4.6 Q0.2 6.5 1 7.5 V9.4 Q1 10.4 2 10.4 H2.9 Q3.9 10.4 3.9 9.4 V7.4 Q4.6 7.6 5.3 7.3 V10.2 Q5.3 11.3 6.3 11.3 H7.4 Q8.4 11.3 8.4 10.2 V7.9 H9.9 V10.2 Q9.9 11.3 10.9 11.3 H12.3 Q13.4 11.3 13.4 10.2 V7.7 Q14.6 6.6 14.9 5.3 L15.6 4.8 L14.9 4.3 Q14.5 1.1 11.4 1.1 H8.6 Q7.7 1.1 7.1 1.4 Q6 0.6 4.2 0.6 Z" fill="#a478c8"/><path d="M7.3 1.4 Q8.3 3.6 7.4 5.1 Q6.5 6.3 5.1 5.4" stroke="#7a58a0" stroke-width="0.8" fill="none"/></svg>
<div class="t" style="left:575.50px;top:88.98px;font-size:15.6px;line-height:17.428px;color:#a9a9a9;font-family:'Liberation Sans',sans-serif;transform:scaleX(0.9849);transform-origin:0 0;">AdminSeeder.php</div>
<svg style="left:704.5px;top:91.0px;" width="8" height="13" viewBox="0 0 8 13"><path d="M0.8 0.8 L6.5 6.5 L0.8 12.2" stroke="#a9a9a9" stroke-width="1.25" fill="none"/></svg>
<svg style="left:718px;top:88px;" width="19" height="17" viewBox="0 0 19 17"><rect x="2.2" y="1.2" width="6.5" height="3.4" rx="0.8" transform="rotate(35 5.45 2.9)" stroke="#ee9d28" stroke-width="1.4" fill="none"/><rect x="10.5" y="7" width="5.5" height="3" rx="0.8" transform="rotate(-35 13.25 8.5)" stroke="#ee9d28" stroke-width="1.4" fill="none"/><rect x="10.5" y="12.2" width="5.5" height="3" rx="0.8" transform="rotate(-35 13.25 13.7)" stroke="#ee9d28" stroke-width="1.4" fill="none"/><path d="M5.5 4.5 V13.5 H10.5 M5.5 9.5 H10.5" stroke="#ee9d28" stroke-width="1.4" fill="none"/></svg>
<div class="t" style="left:741.30px;top:88.98px;font-size:15.6px;line-height:17.428px;color:#a9a9a9;font-family:'Liberation Sans',sans-serif;transform:scaleX(0.9659);transform-origin:0 0;">AdminSeeder</div>
<svg style="left:839.5px;top:91.0px;" width="8" height="13" viewBox="0 0 8 13"><path d="M0.8 0.8 L6.5 6.5 L0.8 12.2" stroke="#a9a9a9" stroke-width="1.25" fill="none"/></svg>
<svg style="left:855px;top:88px;" width="15" height="17" viewBox="0 0 15 17"><path d="M7.5 1 L14 4.5 V12.5 L7.5 16 L1 12.5 V4.5 Z M1 4.5 L7.5 8.2 L14 4.5 M7.5 8.2 V16" stroke="#b180d7" stroke-width="1.3" fill="none" stroke-linejoin="round"/></svg>
<div class="t" style="left:875.60px;top:88.98px;font-size:15.6px;line-height:17.428px;color:#a9a9a9;font-family:'Liberation Sans',sans-serif;transform:scaleX(0.9503);transform-origin:0 0;">run()</div>
<div class="a" style="left:0;top:0;width:1920px;height:1039px;clip-path:inset(110px 17px 487px 377px)">
<div class="a" style="left:377px;top:142.4px;width:1407px;height:22.8px;background:transparent;border:1.2px solid #282828;border-left:none;border-right:none;"></div>
<div class="a" style="left:459px;top:110px;width:1px;height:237.6px;background:#404040;"></div>
<div class="a" style="left:495px;top:110px;width:1.2px;height:214.8px;background:#707070;"></div>
<div class="t" style="left:409.22px;top:145.93px;font-size:16.3px;line-height:18.465px;color:#6e7681;font-family:'Liberation Mono',monospace;transform:scaleX(0.9446);transform-origin:0 0;">14</div>
<div class="t" style="left:459.00px;top:145.93px;font-size:16.3px;line-height:18.465px;color:#cccccc;font-family:'Liberation Mono',monospace;transform:scaleX(0.9446);transform-origin:0 0;"><span style="color:#cccccc">        </span><span style="color:#9cdcfe">$admin</span><span style="color:#cccccc"> = </span><span style="color:#569cd6">new</span><span style="color:#cccccc"> \</span><span style="color:#4ec9b0">App</span><span style="color:#cccccc">\</span><span style="color:#4ec9b0">Models</span><span style="color:#cccccc">\</span><span style="color:#4ec9b0">User</span><span style="color:#cccccc">;</span></div>
<div class="t" style="left:409.22px;top:168.73px;font-size:16.3px;line-height:18.465px;color:#6e7681;font-family:'Liberation Mono',monospace;transform:scaleX(0.9446);transform-origin:0 0;">15</div>
<div class="t" style="left:459.00px;top:168.73px;font-size:16.3px;line-height:18.465px;color:#cccccc;font-family:'Liberation Mono',monospace;transform:scaleX(0.9446);transform-origin:0 0;"><span style="color:#cccccc">        </span><span style="color:#9cdcfe">$admin</span><span style="color:#cccccc">-&gt;</span><span style="color:#9cdcfe">username</span><span style="color:#cccccc"> = </span><span style="color:#ce9178">&quot;admin&quot;</span><span style="color:#cccccc">;</span></div>
<div class="t" style="left:409.22px;top:191.53px;font-size:16.3px;line-height:18.465px;color:#6e7681;font-family:'Liberation Mono',monospace;transform:scaleX(0.9446);transform-origin:0 0;">16</div>
<div class="t" style="left:459.00px;top:191.53px;font-size:16.3px;line-height:18.465px;color:#cccccc;font-family:'Liberation Mono',monospace;transform:scaleX(0.9446);transform-origin:0 0;"><span style="color:#cccccc">        </span><span style="color:#9cdcfe">$admin</span><span style="color:#cccccc">-&gt;</span><span style="color:#9cdcfe">name</span><span style="color:#cccccc"> = </span><span style="color:#ce9178">&quot;Admin Aplikasi&quot;</span><span style="color:#cccccc">;</span></div>
<div class="t" style="left:409.22px;top:214.33px;font-size:16.3px;line-height:18.465px;color:#6e7681;font-family:'Liberation Mono',monospace;transform:scaleX(0.9446);transform-origin:0 0;">17</div>
<div class="t" style="left:459.00px;top:214.33px;font-size:16.3px;line-height:18.465px;color:#cccccc;font-family:'Liberation Mono',monospace;transform:scaleX(0.9446);transform-origin:0 0;"><span style="color:#cccccc">        </span><span style="color:#9cdcfe">$admin</span><span style="color:#cccccc">-&gt;</span><span style="color:#9cdcfe">email</span><span style="color:#cccccc"> = </span><span style="color:#ce9178">&quot;admin@sisfo.com&quot;</span><span style="color:#cccccc">;</span></div>
<div class="t" style="left:409.22px;top:237.13px;font-size:16.3px;line-height:18.465px;color:#6e7681;font-family:'Liberation Mono',monospace;transform:scaleX(0.9446);transform-origin:0 0;">18</div>
<div class="a" style="left:790.24px;top:234.1px;width:64.08px;height:21px;background:#262626;"></div>
<div class="t" style="left:459.00px;top:237.13px;font-size:16.3px;line-height:18.465px;color:#cccccc;font-family:'Liberation Mono',monospace;transform:scaleX(0.9446);transform-origin:0 0;"><span style="color:#cccccc">        </span><span style="color:#9cdcfe">$admin</span><span style="color:#cccccc">-&gt;</span><span style="color:#9cdcfe">level</span><span style="color:#cccccc"> = </span><span style="color:#dcdcaa">json_encode</span><span style="color:#179fff">(</span><span style="color:#969696">value: </span><span style="color:#ffd700">[</span><span style="color:#ce9178">&quot;ADMIN&quot;</span><span style="color:#ffd700">]</span><span style="color:#179fff">)</span><span style="color:#cccccc">;</span></div>
<div class="t" style="left:409.22px;top:259.93px;font-size:16.3px;line-height:18.465px;color:#6e7681;font-family:'Liberation Mono',monospace;transform:scaleX(0.9446);transform-origin:0 0;">19</div>
<div class="a" style="left:817.96px;top:256.9px;width:64.08px;height:21px;background:#262626;"></div>
<div class="t" style="left:459.00px;top:259.93px;font-size:16.3px;line-height:18.465px;color:#cccccc;font-family:'Liberation Mono',monospace;transform:scaleX(0.9446);transform-origin:0 0;"><span style="color:#cccccc">        </span><span style="color:#9cdcfe">$admin</span><span style="color:#cccccc">-&gt;</span><span style="color:#9cdcfe">password</span><span style="color:#cccccc"> = </span><span style="color:#cccccc">\</span><span style="color:#4ec9b0">Hash</span><span style="color:#cccccc">::</span><span style="color:#dcdcaa">make</span><span style="color:#179fff">(</span><span style="color:#969696">value: </span><span style="color:#ce9178">&quot;12345678&quot;</span><span style="color:#179fff">)</span><span style="color:#cccccc">;</span></div>
<div class="t" style="left:409.22px;top:282.73px;font-size:16.3px;line-height:18.465px;color:#6e7681;font-family:'Liberation Mono',monospace;transform:scaleX(0.9446);transform-origin:0 0;">20</div>
<div class="t" style="left:459.00px;top:282.73px;font-size:16.3px;line-height:18.465px;color:#cccccc;font-family:'Liberation Mono',monospace;transform:scaleX(0.9446);transform-origin:0 0;"><span style="color:#cccccc">        </span><span style="color:#9cdcfe">$admin</span><span style="color:#cccccc">-&gt;</span><span style="color:#dcdcaa">save</span><span style="color:#179fff">(</span><span style="color:#179fff">)</span><span style="color:#cccccc">;</span></div>
<div class="t" style="left:409.22px;top:305.53px;font-size:16.3px;line-height:18.465px;color:#6e7681;font-family:'Liberation Mono',monospace;transform:scaleX(0.9446);transform-origin:0 0;">21</div>
<div class="a" style="left:725.56px;top:302.5px;width:73.32px;height:21px;background:#262626;"></div>
<div class="t" style="left:459.00px;top:305.53px;font-size:16.3px;line-height:18.465px;color:#cccccc;font-family:'Liberation Mono',monospace;transform:scaleX(0.9446);transform-origin:0 0;"><span style="color:#cccccc">        </span><span style="color:#569cd6">$this</span><span style="color:#cccccc">-&gt;</span><span style="color:#9cdcfe">command</span><span style="color:#cccccc">-&gt;</span><span style="color:#dcdcaa">info</span><span style="color:#179fff">(</span><span style="color:#969696">string: </span><span style="color:#ce9178">&quot;User Admin berhasil ditambahkan&quot;</span><span style="color:#179fff">)</span><span style="color:#cccccc">;</span></div>
<div class="t" style="left:409.22px;top:328.33px;font-size:16.3px;line-height:18.465px;color:#6e7681;font-family:'Liberation Mono',monospace;transform:scaleX(0.9446);transform-origin:0 0;">22</div>
<div class="t" style="left:459.00px;top:328.33px;font-size:16.3px;line-height:18.465px;color:#cccccc;font-family:'Liberation Mono',monospace;transform:scaleX(0.9446);transform-origin:0 0;"><span style="color:#cccccc">    </span><span style="color:#da70d6">}</span></div>
<div class="t" style="left:409.22px;top:351.13px;font-size:16.3px;line-height:18.465px;color:#6e7681;font-family:'Liberation Mono',monospace;transform:scaleX(0.9446);transform-origin:0 0;">23</div>
<div class="t" style="left:459.00px;top:351.13px;font-size:16.3px;line-height:18.465px;color:#cccccc;font-family:'Liberation Mono',monospace;transform:scaleX(0.9446);transform-origin:0 0;"><span style="color:#ffd700">}</span></div>
<div class="t" style="left:409.22px;top:373.93px;font-size:16.3px;line-height:18.465px;color:#6e7681;font-family:'Liberation Mono',monospace;transform:scaleX(0.9446);transform-origin:0 0;">24</div>
<div class="a" style="left:377px;top:110px;width:1407px;height:45.6px;background:#1f1f1f;"></div>
<div class="a" style="left:377px;top:155.6px;width:1407px;height:4px;background:linear-gradient(#000000,#00000000);"></div>
<div class="t" style="left:418.46px;top:112.63px;font-size:16.3px;line-height:18.465px;color:#6e7681;font-family:'Liberation Mono',monospace;transform:scaleX(0.9446);transform-origin:0 0;">5</div>
<div class="t" style="left:459.00px;top:112.63px;font-size:16.3px;line-height:18.465px;color:#cccccc;font-family:'Liberation Mono',monospace;transform:scaleX(0.9446);transform-origin:0 0;"><span style="color:#569cd6">class</span><span style="color:#cccccc"> </span><span style="color:#4ec9b0">AdminSeeder</span><span style="color:#cccccc"> </span><span style="color:#569cd6">extends</span><span style="color:#cccccc"> </span><span style="color:#4ec9b0">Seeder</span></div>
<div class="t" style="left:409.22px;top:135.83px;font-size:16.3px;line-height:18.465px;color:#6e7681;font-family:'Liberation Mono',monospace;transform:scaleX(0.9446);transform-origin:0 0;">12</div>
<div class="a" style="left:688.6px;top:132.8px;width:54.84px;height:21px;background:#262626;"></div>
<div class="t" style="left:459.00px;top:135.83px;font-size:16.3px;line-height:18.465px;color:#cccccc;font-family:'Liberation Mono',monospace;transform:scaleX(0.9446);transform-origin:0 0;"><span style="color:#cccccc">    </span><span style="color:#569cd6">public</span><span style="color:#cccccc"> </span><span style="color:#569cd6">function</span><span style="color:#cccccc"> </span><span style="color:#dcdcaa">run</span><span style="color:#da70d6">()</span><span style="color:#969696">: void</span></div>
</div>
<div class="a" style="left:1903px;top:110px;width:1px;height:442px;background:#131315;"></div>
<div class="a" style="left:1903px;top:110px;width:17px;height:1.2px;background:#131315;"></div>
<div class="a" style="left:1903.6px;top:243.6px;width:16.4px;height:193.3px;background:#2b2b2b;"></div>
<div class="a" style="left:1904px;top:256px;width:16px;height:2.4px;background:#8a8a8a;"></div>
<svg style="left:1792px;top:110px;opacity:.62" width="80" height="50" viewBox="0 0 80 50"><rect x="0.00" y="0.20" width="5.10" height="1.5" fill="#569cd6"/><rect x="0.00" y="2.24" width="9.18" height="1.5" fill="#569cd6"/><rect x="10.20" y="2.24" width="16.32" height="1.5" fill="#4ec9b0"/><rect x="26.52" y="2.24" width="1.02" height="1.5" fill="#cccccc"/><rect x="0.00" y="4.28" width="3.06" height="1.5" fill="#569cd6"/><rect x="4.08" y="4.28" width="34.68" height="1.5" fill="#cccccc"/><rect x="38.76" y="4.28" width="18.36" height="1.5" fill="#4ec9b0"/><rect x="57.12" y="4.28" width="1.02" height="1.5" fill="#cccccc"/><rect x="0.00" y="6.32" width="3.06" height="1.5" fill="#569cd6"/><rect x="4.08" y="6.32" width="20.40" height="1.5" fill="#cccccc"/><rect x="24.48" y="6.32" width="6.12" height="1.5" fill="#4ec9b0"/><rect x="30.60" y="6.32" width="1.02" height="1.5" fill="#cccccc"/><rect x="0.00" y="8.36" width="5.10" height="1.5" fill="#569cd6"/><rect x="6.12" y="8.36" width="11.22" height="1.5" fill="#4ec9b0"/><rect x="18.36" y="8.36" width="7.14" height="1.5" fill="#569cd6"/><rect x="26.52" y="8.36" width="6.12" height="1.5" fill="#4ec9b0"/><rect x="0.00" y="10.40" width="1.02" height="1.5" fill="#ffd700"/><rect x="4.08" y="12.44" width="3.06" height="1.5" fill="#6a9955"/><rect x="5.10" y="14.48" width="1.02" height="1.5" fill="#6a9955"/><rect x="7.14" y="14.48" width="3.06" height="1.5" fill="#6a9955"/><rect x="11.22" y="14.48" width="3.06" height="1.5" fill="#6a9955"/><rect x="15.30" y="14.48" width="8.16" height="1.5" fill="#6a9955"/><rect x="24.48" y="14.48" width="6.12" height="1.5" fill="#6a9955"/><rect x="5.10" y="16.52" width="1.02" height="1.5" fill="#6a9955"/><rect x="5.10" y="18.56" width="1.02" height="1.5" fill="#6a9955"/><rect x="7.14" y="18.56" width="7.14" height="1.5" fill="#569cd6"/><rect x="15.30" y="18.56" width="4.08" height="1.5" fill="#569cd6"/><rect x="5.10" y="20.60" width="2.04" height="1.5" fill="#6a9955"/><rect x="4.08" y="22.64" width="6.12" height="1.5" fill="#569cd6"/><rect x="11.22" y="22.64" width="8.16" height="1.5" fill="#569cd6"/><rect x="20.40" y="22.64" width="3.06" height="1.5" fill="#dcdcaa"/><rect x="23.46" y="22.64" width="2.04" height="1.5" fill="#da70d6"/><rect x="25.50" y="22.64" width="1.02" height="1.5" fill="#969696"/><rect x="27.54" y="22.64" width="4.08" height="1.5" fill="#969696"/><rect x="4.08" y="24.68" width="1.02" height="1.5" fill="#da70d6"/><rect x="8.16" y="26.72" width="6.12" height="1.5" fill="#9cdcfe"/><rect x="15.30" y="26.72" width="1.02" height="1.5" fill="#cccccc"/><rect x="17.34" y="26.72" width="3.06" height="1.5" fill="#569cd6"/><rect x="21.42" y="26.72" width="12.24" height="1.5" fill="#cccccc"/><rect x="33.66" y="26.72" width="4.08" height="1.5" fill="#4ec9b0"/><rect x="37.74" y="26.72" width="1.02" height="1.5" fill="#cccccc"/><rect x="8.16" y="28.76" width="6.12" height="1.5" fill="#9cdcfe"/><rect x="14.28" y="28.76" width="2.04" height="1.5" fill="#cccccc"/><rect x="16.32" y="28.76" width="8.16" height="1.5" fill="#9cdcfe"/><rect x="25.50" y="28.76" width="1.02" height="1.5" fill="#cccccc"/><rect x="27.54" y="28.76" width="7.14" height="1.5" fill="#ce9178"/><rect x="34.68" y="28.76" width="1.02" height="1.5" fill="#cccccc"/><rect x="8.16" y="30.80" width="6.12" height="1.5" fill="#9cdcfe"/><rect x="14.28" y="30.80" width="2.04" height="1.5" fill="#cccccc"/><rect x="16.32" y="30.80" width="4.08" height="1.5" fill="#9cdcfe"/><rect x="21.42" y="30.80" width="1.02" height="1.5" fill="#cccccc"/><rect x="23.46" y="30.80" width="6.12" height="1.5" fill="#ce9178"/><rect x="30.60" y="30.80" width="9.18" height="1.5" fill="#ce9178"/><rect x="39.78" y="30.80" width="1.02" height="1.5" fill="#cccccc"/><rect x="8.16" y="32.84" width="6.12" height="1.5" fill="#9cdcfe"/><rect x="14.28" y="32.84" width="2.04" height="1.5" fill="#cccccc"/><rect x="16.32" y="32.84" width="5.10" height="1.5" fill="#9cdcfe"/><rect x="22.44" y="32.84" width="1.02" height="1.5" fill="#cccccc"/><rect x="24.48" y="32.84" width="17.34" height="1.5" fill="#ce9178"/><rect x="41.82" y="32.84" width="1.02" height="1.5" fill="#cccccc"/><rect x="8.16" y="34.88" width="6.12" height="1.5" fill="#9cdcfe"/><rect x="14.28" y="34.88" width="2.04" height="1.5" fill="#cccccc"/><rect x="16.32" y="34.88" width="5.10" height="1.5" fill="#9cdcfe"/><rect x="22.44" y="34.88" width="1.02" height="1.5" fill="#cccccc"/><rect x="24.48" y="34.88" width="11.22" height="1.5" fill="#dcdcaa"/><rect x="35.70" y="34.88" width="1.02" height="1.5" fill="#179fff"/><rect x="36.72" y="34.88" width="6.12" height="1.5" fill="#969696"/><rect x="43.86" y="34.88" width="9.18" height="1.5" fill="#ce9178"/><rect x="53.04" y="34.88" width="2.04" height="1.5" fill="#cccccc"/><rect x="8.16" y="36.92" width="6.12" height="1.5" fill="#9cdcfe"/><rect x="14.28" y="36.92" width="2.04" height="1.5" fill="#cccccc"/><rect x="16.32" y="36.92" width="8.16" height="1.5" fill="#9cdcfe"/><rect x="25.50" y="36.92" width="1.02" height="1.5" fill="#cccccc"/><rect x="27.54" y="36.92" width="1.02" height="1.5" fill="#cccccc"/><rect x="28.56" y="36.92" width="4.08" height="1.5" fill="#4ec9b0"/><rect x="32.64" y="36.92" width="2.04" height="1.5" fill="#cccccc"/><rect x="34.68" y="36.92" width="4.08" height="1.5" fill="#dcdcaa"/><rect x="38.76" y="36.92" width="1.02" height="1.5" fill="#179fff"/><rect x="39.78" y="36.92" width="6.12" height="1.5" fill="#969696"/><rect x="46.92" y="36.92" width="10.20" height="1.5" fill="#ce9178"/><rect x="57.12" y="36.92" width="2.04" height="1.5" fill="#cccccc"/><rect x="8.16" y="38.96" width="6.12" height="1.5" fill="#9cdcfe"/><rect x="14.28" y="38.96" width="2.04" height="1.5" fill="#cccccc"/><rect x="16.32" y="38.96" width="4.08" height="1.5" fill="#dcdcaa"/><rect x="20.40" y="38.96" width="3.06" height="1.5" fill="#cccccc"/><rect x="8.16" y="41.00" width="5.10" height="1.5" fill="#569cd6"/><rect x="13.26" y="41.00" width="2.04" height="1.5" fill="#cccccc"/><rect x="15.30" y="41.00" width="7.14" height="1.5" fill="#9cdcfe"/><rect x="22.44" y="41.00" width="2.04" height="1.5" fill="#cccccc"/><rect x="24.48" y="41.00" width="4.08" height="1.5" fill="#dcdcaa"/><rect x="28.56" y="41.00" width="1.02" height="1.5" fill="#179fff"/><rect x="29.58" y="41.00" width="7.14" height="1.5" fill="#969696"/><rect x="37.74" y="41.00" width="5.10" height="1.5" fill="#ce9178"/><rect x="43.86" y="41.00" width="5.10" height="1.5" fill="#ce9178"/><rect x="49.98" y="41.00" width="8.16" height="1.5" fill="#ce9178"/><rect x="59.16" y="41.00" width="12.24" height="1.5" fill="#ce9178"/><rect x="71.40" y="41.00" width="2.04" height="1.5" fill="#cccccc"/><rect x="4.08" y="43.04" width="1.02" height="1.5" fill="#da70d6"/><rect x="0.00" y="45.08" width="1.02" height="1.5" fill="#ffd700"/></svg>
<div class="a" style="left:377px;top:552px;width:1543px;height:1px;background:#2b2b2b;"></div>
<div class="t" style="left:401.00px;top:566.55px;font-size:13.2px;line-height:14.747px;color:#9d9d9d;font-family:'Liberation Sans',sans-serif;transform:scaleX(0.8725);transform-origin:0 0;">PROBLEMS</div>
<div class="t" style="left:494.00px;top:566.55px;font-size:13.2px;line-height:14.747px;color:#9d9d9d;font-family:'Liberation Sans',sans-serif;transform:scaleX(0.9104);transform-origin:0 0;">OUTPUT</div>
<div class="t" style="left:572.00px;top:566.55px;font-size:13.2px;line-height:14.747px;color:#9d9d9d;font-family:'Liberation Sans',sans-serif;transform:scaleX(0.8909);transform-origin:0 0;">DEBUG CONSOLE</div>
<div class="t" style="left:703.30px;top:566.55px;font-size:13.2px;line-height:14.747px;color:#e7e7e7;font-family:'Liberation Sans',sans-serif;transform:scaleX(0.9245);transform-origin:0 0;">TERMINAL</div>
<div class="t" style="left:793.70px;top:566.55px;font-size:13.2px;line-height:14.747px;color:#9d9d9d;font-family:'Liberation Sans',sans-serif;transform:scaleX(0.8423);transform-origin:0 0;">PORTS</div>
<div class="a" style="left:701px;top:585px;width:67px;height:1.6px;background:#0078d4;"></div>
<svg style="left:1778px;top:566px;" width="17" height="16" viewBox="0 0 17 16"><path d="M8.5 0.5 V15.5 M1 8 H16" stroke="#cccccc" stroke-width="1.4"/></svg>
<svg style="left:1800px;top:570px;" width="10" height="6" viewBox="0 0 10 6"><path d="M0.7 0.7 L5 5 L9.3 0.7" stroke="#cccccc" stroke-width="1.2" fill="none"/></svg>
<div class="a" style="left:1825px;top:572px;width:2.6px;height:2.6px;background:#cccccc;border-radius:50%;"></div>
<div class="a" style="left:1831.5px;top:572px;width:2.6px;height:2.6px;background:#cccccc;border-radius:50%;"></div>
<div class="a" style="left:1838px;top:572px;width:2.6px;height:2.6px;background:#cccccc;border-radius:50%;"></div>
<svg style="left:1854.5px;top:567px;" width="14" height="9" viewBox="0 0 14 9"><path d="M0.8 8 L7 1.5 L13.2 8" stroke="#cccccc" stroke-width="1.3" fill="none"/></svg>
<svg style="left:1886px;top:567px;" width="13" height="13" viewBox="0 0 13 13"><path d="M1 1 L12 12 M12 1 L1 12" stroke="#cccccc" stroke-width="1.35"/></svg>
<div class="t" style="left:401.00px;top:619.03px;font-size:16.3px;line-height:18.465px;color:#cccccc;font-family:'Liberation Mono',monospace;transform:scaleX(0.9201);transform-origin:0 0;"><span style="color:#cccccc">PS C:\Users\ASUS\laravel-sisfo&gt; </span><span style="color:#f5f543">php</span><span style="color:#cccccc"> artisan make:seeder AdminSeeder</span></div>
<div class="a" style="left:419px;top:657px;width:54px;height:21px;background:#2472c8;"></div>
<div class="t" style="left:419.00px;top:661.03px;font-size:16.3px;line-height:18.465px;color:#cccccc;font-family:'Liberation Mono',monospace;transform:scaleX(0.9201);transform-origin:0 0;"><span style="color:#ffffff"> INFO </span><span style="color:#cccccc"> Seeder </span><span style="color:#ffffff;font-weight:bold">[C:\Users\ASUS\laravel-sisfo\database\seeders\AdminSeeder.php]</span><span style="color:#cccccc"> created successfully.</span></div>
<div class="t" style="left:401.00px;top:703.03px;font-size:16.3px;line-height:18.465px;color:#cccccc;font-family:'Liberation Mono',monospace;transform:scaleX(0.9201);transform-origin:0 0;"><span style="color:#cccccc">PS C:\Users\ASUS\laravel-sisfo&gt; </span><span style="color:#f5f543">php</span><span style="color:#cccccc"> artisan db:seed </span><span style="color:#858585">--class=AdminSeeder</span></div>
<div class="a" style="left:419px;top:741px;width:54px;height:21px;background:#2472c8;"></div>
<div class="t" style="left:419.00px;top:745.03px;font-size:16.3px;line-height:18.465px;color:#cccccc;font-family:'Liberation Mono',monospace;transform:scaleX(0.9201);transform-origin:0 0;"><span style="color:#ffffff"> INFO </span><span style="color:#cccccc"> Seeding database.</span></div>
<div class="t" style="left:401.00px;top:787.03px;font-size:16.3px;line-height:18.465px;color:#cccccc;font-family:'Liberation Mono',monospace;transform:scaleX(0.9201);transform-origin:0 0;"><span style="color:#23d18b">User Admin berhasil ditambahkan</span></div>
<div class="t" style="left:401.00px;top:808.03px;font-size:16.3px;line-height:18.465px;color:#cccccc;font-family:'Liberation Mono',monospace;transform:scaleX(0.9201);transform-origin:0 0;"><span style="color:#cccccc">PS C:\Users\ASUS\laravel-sisfo&gt; </span></div>
<div class="a" style="left:689px;top:804px;width:9.5px;height:21px;background:#cccccc;"></div>
<div class="a" style="left:385.2px;top:620.8px;width:9.6px;height:9.6px;background:#2488bd;border-radius:50%;"></div>
<div class="a" style="left:385.2px;top:704.8px;width:9.6px;height:9.6px;background:#2488bd;border-radius:50%;"></div>
<div class="a" style="left:385.4px;top:810px;width:9.2px;height:9.2px;background:transparent;border-radius:50%;border:2px solid #6b6b6b;"></div>
<div class="a" style="left:378.4px;top:688.1px;width:684.3px;height:160.8px;background:transparent;border:4.7px solid #e81e25;"></div>
<div class="a" style="left:1774px;top:594px;width:1px;height:420px;background:#080808;"></div>
<div class="a" style="left:1775px;top:963.7px;width:15px;height:50.3px;background:#383838;"></div>
<div class="a" style="left:1790px;top:594px;width:1px;height:420px;background:#2b2b2b;"></div>
<div class="a" style="left:1775px;top:594px;width:5px;height:4.5px;background:#2b8dc7;"></div>
<div class="a" style="left:1775px;top:845px;width:5px;height:5px;background:#2b8dc7;"></div>
<div class="a" style="left:1775px;top:961px;width:5px;height:6.8px;background:#2b8dc7;"></div>
<div class="a" style="left:1775px;top:971px;width:5px;height:6.8px;background:#2b8dc7;"></div>
<div class="a" style="left:1775px;top:984px;width:5px;height:6.8px;background:#6f6f6f;"></div>
<div class="a" style="left:1791px;top:619.8px;width:129px;height:26.4px;background:#37373d;"></div>
<div class="a" style="left:1791px;top:619.8px;width:1.6px;height:26.4px;background:#0078d4;"></div>
<svg style="left:1802.5px;top:598.5px;" width="20" height="18" viewBox="0 0 20 18"><path d="M3 1 H18 Q19 1 18.8 2 L17 15.5 Q16.8 16.5 15.8 16.5 H1.5 Q0.5 16.5 0.7 15.5 L2.2 2 Q2.3 1 3 1 Z" stroke="#cccccc" stroke-width="1.2" fill="none"/><path d="M5 5.5 L9.5 8.3 L5 11" stroke="#cccccc" stroke-width="1.3" fill="none"/><path d="M9 12.5 H14.5" stroke="#cccccc" stroke-width="1.4"/></svg>
<div class="t" style="left:1826.70px;top:598.48px;font-size:15.6px;line-height:17.428px;color:#cccccc;font-family:'Liberation Sans',sans-serif;transform:scaleX(0.9413);transform-origin:0 0;">php</div>
<svg style="left:1802.5px;top:624.8px;" width="20" height="18" viewBox="0 0 20 18"><path d="M3 1 H18 Q19 1 18.8 2 L17 15.5 Q16.8 16.5 15.8 16.5 H1.5 Q0.5 16.5 0.7 15.5 L2.2 2 Q2.3 1 3 1 Z" stroke="#cccccc" stroke-width="1.2" fill="none"/><path d="M5 5.5 L9.5 8.3 L5 11" stroke="#cccccc" stroke-width="1.3" fill="none"/><path d="M9 12.5 H14.5" stroke="#cccccc" stroke-width="1.4"/></svg>
<div class="t" style="left:1826.70px;top:624.88px;font-size:15.6px;line-height:17.428px;color:#cccccc;font-family:'Liberation Sans',sans-serif;transform:scaleX(0.9923);transform-origin:0 0;">powershell</div>
<div class="a" style="left:0px;top:1014px;width:1920px;height:1px;background:#2b2b2b;"></div>
<div class="a" style="left:0px;top:1015px;width:41px;height:24px;background:#0078d4;"></div>
<svg style="left:14px;top:1018px;" width="13" height="16" viewBox="0 0 13 16"><path d="M1 5.5 L5.5 10 L1 14.5 M11.5 1 L7 5.5 L11.5 10" stroke="#ffffff" stroke-width="1.3" fill="none"/></svg>
<svg style="left:51px;top:1019px;" width="16" height="16" viewBox="0 0 16 16"><circle cx="8" cy="8" r="7.2" stroke="#cccccc" stroke-width="1.2" fill="none"/><path d="M5 5 L11 11 M11 5 L5 11" stroke="#cccccc" stroke-width="1.3"/></svg>
<div class="t" style="left:71.00px;top:1019.76px;font-size:14.4px;line-height:16.088px;color:#cccccc;font-family:'Liberation Sans',sans-serif;transform:scaleX(0.8116);transform-origin:0 0;">0</div>
<svg style="left:83.5px;top:1018.5px;" width="16" height="15" viewBox="0 0 16 15"><path d="M8 1 L15 14 H1 Z" stroke="#cccccc" stroke-width="1.2" fill="none" stroke-linejoin="round"/><path d="M8 5.5 V10" stroke="#cccccc" stroke-width="1.3"/><circle cx="8" cy="12" r="0.8" fill="#cccccc"/></svg>
<div class="t" style="left:103.80px;top:1019.76px;font-size:14.4px;line-height:16.088px;color:#cccccc;font-family:'Liberation Sans',sans-serif;transform:scaleX(0.8116);transform-origin:0 0;">0</div>
<div class="a" style="left:1237px;top:1015px;width:41px;height:24px;background:#3a3d41;"></div>
<svg style="left:1249.5px;top:1019px;" width="17" height="16" viewBox="0 0 17 16"><circle cx="6.5" cy="6.5" r="5.6" stroke="#cccccc" stroke-width="1.3" fill="none"/><path d="M10.5 10.5 L15.5 15.5" stroke="#cccccc" stroke-width="1.5"/><path d="M6.5 3.8 V9.2 M3.8 6.5 H9.2" stroke="#cccccc" stroke-width="1.4"/></svg>
<div class="t" style="left:1288.00px;top:1019.76px;font-size:14.4px;line-height:16.088px;color:#cccccc;font-family:'Liberation Sans',sans-serif;transform:scaleX(0.9491);transform-origin:0 0;">Ln 14, Col 39</div>
<div class="t" style="left:1388.40px;top:1019.76px;font-size:14.4px;line-height:16.088px;color:#cccccc;font-family:'Liberation Sans',sans-serif;transform:scaleX(0.9057);transform-origin:0 0;">Spaces: 4</div>
<div class="t" style="left:1467.00px;top:1019.76px;font-size:14.4px;line-height:16.088px;color:#cccccc;font-family:'Liberation Sans',sans-serif;transform:scaleX(0.8996);transform-origin:0 0;">UTF-8</div>
<div class="t" style="left:1524.20px;top:1019.76px;font-size:14.4px;line-height:16.088px;color:#cccccc;font-family:'Liberation Sans',sans-serif;transform:scaleX(0.7319);transform-origin:0 0;">LF</div>
<div class="t" style="left:1556.70px;top:1019.76px;font-size:14.4px;line-height:16.088px;color:#cccccc;font-family:'Liberation Sans',sans-serif;transform:scaleX(0.8612);transform-origin:0 0;">PHP</div>
<svg style="left:1601px;top:1019px;" width="19" height="16" viewBox="0 0 19 16"><path d="M3.3 6 Q1.7 1.7 5.9 1.3 Q8.4 1.1 9.5 3 Q10.6 1.1 13.1 1.3 Q17.3 1.7 15.7 6 Q18.6 7.7 18.2 10.7 Q17 14.9 9.5 15.1 Q2 14.9 0.8 10.7 Q0.4 7.7 3.3 6 Z" fill="#d0d0d0"/><circle cx="6.3" cy="4.4" r="2" fill="#181818"/><circle cx="12.7" cy="4.4" r="2" fill="#181818"/><path d="M4.6 8 Q9.5 6.8 14.4 8 V11.8 Q9.5 13.2 4.6 11.8 Z" fill="#181818"/><rect x="7.1" y="8.7" width="1.3" height="2.8" fill="#d0d0d0"/><rect x="10.4" y="8.7" width="1.3" height="2.8" fill="#d0d0d0"/></svg>
<svg style="left:1639px;top:1018.5px;" width="15" height="16" viewBox="0 0 15 16"><path d="M2.6 11 A6.4 6.4 0 1 1 12.4 11" stroke="#cccccc" stroke-width="1.3" fill="none"/><path d="M4.8 9 A3.6 3.6 0 1 1 10.2 9" stroke="#cccccc" stroke-width="1.3" fill="none"/><circle cx="7.5" cy="6.6" r="1.3" fill="#cccccc"/><path d="M7.5 8 V15.5" stroke="#cccccc" stroke-width="1.6"/></svg>
<div class="t" style="left:1658.90px;top:1019.76px;font-size:14.4px;line-height:16.088px;color:#cccccc;font-family:'Liberation Sans',sans-serif;transform:scaleX(0.9430);transform-origin:0 0;">Go Live</div>
<div class="t" style="left:1725.00px;top:1019.76px;font-size:14.4px;line-height:16.088px;color:#cccccc;font-family:'Liberation Sans',sans-serif;transform:scaleX(0.8992);transform-origin:0 0;">8.2</div>
<svg style="left:1762.5px;top:1018.5px;" width="17" height="16" viewBox="0 0 17 16"><circle cx="11.5" cy="5.5" r="4.3" stroke="#cccccc" stroke-width="1.3" fill="none"/><circle cx="12.3" cy="4.7" r="0.9" fill="#cccccc"/><path d="M8.5 8.5 L1.5 15 M3.5 13 L5.5 15 M5.3 11.3 L7 13" stroke="#cccccc" stroke-width="1.3" fill="none"/></svg>
<svg style="left:1799px;top:1019px;" width="16" height="16" viewBox="0 0 16 16"><circle cx="8" cy="8" r="7.2" stroke="#cccccc" stroke-width="1.3" fill="none"/><path d="M3 13 L13 3" stroke="#cccccc" stroke-width="1.3"/></svg>
<div class="t" style="left:1819.30px;top:1019.76px;font-size:14.4px;line-height:16.088px;color:#cccccc;font-family:'Liberation Sans',sans-serif;transform:scaleX(1.0083);transform-origin:0 0;">Prettier</div>
<svg style="left:1886.5px;top:1019px;" width="15" height="16" viewBox="0 0 15 16"><path d="M2.5 12 V7 Q2.5 1.3 7.5 1.3 Q12.5 1.3 12.5 7 V12 L14 13.3 H1 Z" stroke="#cccccc" stroke-width="1.3" fill="none" stroke-linejoin="round"/><path d="M5.8 14.8 Q7.5 16.2 9.2 14.8" stroke="#cccccc" stroke-width="1.3" fill="none"/></svg>
</div></body></html>
